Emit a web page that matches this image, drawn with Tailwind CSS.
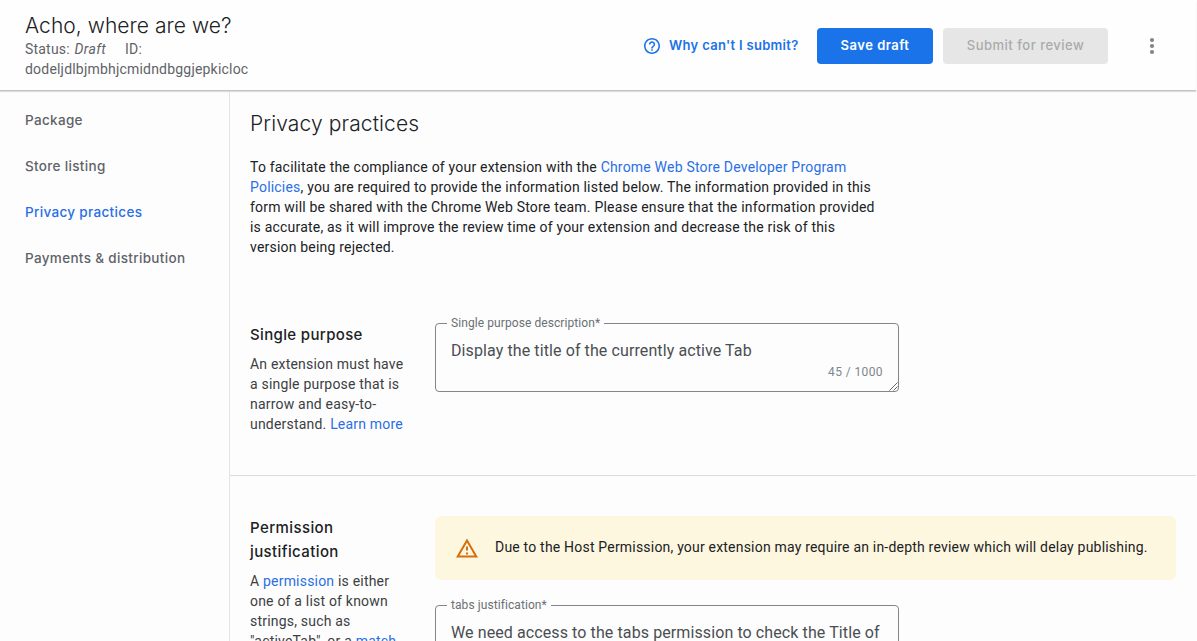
<!DOCTYPE html>
<html lang="en">
<head>
<meta charset="utf-8">
<title>Privacy practices</title>
<script src="https://cdn.jsdelivr.net/npm/@tailwindcss/browser@4"></script>
</head>
<body class="flex h-[641px] w-[1197px] flex-col overflow-hidden bg-[#fdfdfd] pr-px font-['Roboto',sans-serif] text-sm leading-5 text-[#202124]">
<header class="relative z-10 flex h-[90px] shrink-0 items-center bg-[#fefefe] pr-8 pl-[25px] shadow-[0_1px_0_#c2c4c4,0_2px_1px_#dcdedd]">
  <div class="h-[78px] w-[240px] pt-[6px] tracking-[0.2px] text-[#5f6368]">
    <h1 class="h-[27px] font-[Inter] text-[21px] leading-[27px] font-light whitespace-nowrap tracking-[0.05px] text-[#202124]">Acho, where are we?</h1>
    <p>Status: <i class="ml-px tracking-[0.35px]">Draft</i><span class="ml-[19px]">ID:</span></p>
    <p>dodeljdlbjmbhjcmidndbggjepkicloc</p>
  </div>
  <div class="ml-auto flex items-center pt-[2px] font-[Inter] text-[13px] font-semibold">
    <a class="flex items-center gap-[9px] text-[#1a73e8]">
      <svg class="size-4" viewBox="2 2 20 20" fill="currentColor"><path d="M11 18h2v-2h-2v2zm1-16C6.48 2 2 6.48 2 12s4.480 10 10 10 10-4.480 10-10S17.520 2 12 2zm0 18c-4.410 0-8-3.590-8-8s3.590-8 8-8 8 3.590 8 8-3.590 8-8 8zm0-14c-2.210 0-4 1.790-4 4h2c0-1.100.9-2 2-2s2 .9 2 2c0 2-3 1.750-3 5h2c0-2.250 3-2.500 3-5 0-2.210-1.790-4-4-4z"/></svg>
      <span class="w-[130px] pb-[2px] tracking-[0.3px] whitespace-nowrap">Why can't I submit?</span>
    </a>
    <button class="ml-[18px] h-9 w-[116px] rounded bg-[#1a73e8] pb-[2px] tracking-[0.5px] whitespace-nowrap text-white">Save draft</button>
    <button class="ml-[10px] h-9 w-[165px] rounded bg-[#e6e6e6] pb-[2px] font-medium tracking-[0.5px] whitespace-nowrap text-[#a9abac]">Submit for review</button>
    <svg class="ml-8 size-6 text-[#80868b]" viewBox="0 0 24 24" fill="currentColor"><circle cx="12" cy="6" r="2.100"/><circle cx="12" cy="12" r="2.100"/><circle cx="12" cy="18" r="2.100"/></svg>
  </div>
</header>
<div class="flex min-h-0 flex-1">
  <nav class="flex w-[230px] shrink-0 flex-col gap-[26px] border-r border-[#e2e4e7] pt-5 pl-[25px] font-[Inter] text-[13.5px] font-medium tracking-[0.33px] text-[#5f6368]">
    <a>Package</a>
    <a>Store listing</a>
    <a class="text-[#2a6fe6]">Privacy practices</a>
    <a>Payments &amp; distribution</a>
  </nav>
  <main class="min-w-0 flex-1">
    <section class="h-[386px] border-b border-[#dadce0] pt-5 pl-5">
      <h2 class="font-[Inter] text-[21px] leading-7 font-light tracking-[0.12px]">Privacy practices</h2>
      <p class="mt-[19px] w-[640px] tracking-[0.2px]">To facilitate the compliance of your extension with the <a class="text-[#2a6fe6]">Chrome Web Store Developer Program<br>Policies</a>, you are required to provide the information listed below. The information provided in this<br>form will be shared with the Chrome Web Store team. Please ensure that the information provided<br>is accurate, as it will improve the review time of your extension and decrease the risk of this<br>version being rejected.</p>
      <div class="mt-[66px] flex">
        <div class="w-[185px] tracking-[0.2px] text-[#3c4043]">
          <h3 class="mb-[7px] font-[Inter] text-[15px] leading-6 font-medium tracking-[0.35px] text-[#202124]">Single purpose</h3>
          <p class="whitespace-nowrap">An extension must have<br>a single purpose that is<br>narrow and easy-to-<br>understand. <a class="text-[#2a6fe6]">Learn more</a></p>
        </div>
        <div class="relative h-[69px] w-[464px] rounded border border-[#80868b] px-[15px] pt-[15px]">
          <span class="absolute -top-[9px] left-[11px] bg-[#fdfdfd] px-1 text-xs leading-4 tracking-[0.08px] text-[#6b7075]">Single purpose description*</span>
          <p class="text-base leading-6 tracking-[0.1px] text-[#4a4e52]">Display the title of the currently active Tab</p>
          <p class="text-right text-xs leading-[18px] tracking-[0.4px] text-[#80868b]">45 / 1000</p>
          <svg class="absolute right-0 bottom-0 size-[9px]" viewBox="0 0 9 9" fill="none" stroke="#55585c" stroke-width=".9"><path d="M.5 8.500 8.500.5M4.500 8.500 8.500 4.500"/></svg>
        </div>
      </div>
    </section>
    <section class="flex pt-10 pr-5 pl-5">
      <div class="w-[185px] shrink-0 tracking-[0.2px] text-[#3c4043]">
        <h3 class="mb-[7px] font-[Inter] text-[15px] leading-6 font-medium tracking-[0.4px] text-[#202124]">Permission<br>justification</h3>
        <p class="whitespace-nowrap">A <a class="text-[#2a6fe6]">permission</a> is either<br>one of a list of known<br>strings, such as<br>"activeTab", or a <a class="text-[#2a6fe6]">match</a></p>
      </div>
      <div class="flex-1">
        <div class="flex h-16 items-center gap-[17px] rounded-md bg-[#fef7e0] pl-[21px] tracking-[0.2px]">
          <svg class="size-[22px]" viewBox="1 1 22 21" fill="#d56e0c"><path d="M12 5.990 19.530 19H4.470L12 5.990M12 2 1 21h22L12 2zm1 14h-2v2h2v-2zm0-6h-2v4h2v-4z"/></svg>
          <span class="pb-[2px] whitespace-nowrap">Due to the Host Permission, your extension may require an in-depth review which will delay publishing.</span>
        </div>
        <div class="relative mt-[25px] h-[90px] w-[464px] rounded border border-[#80868b] px-[15px] pt-[15px]">
          <span class="absolute -top-[9px] left-[11px] bg-[#fdfdfd] px-1 text-xs leading-4 tracking-[0.08px] text-[#6b7075]">tabs justification*</span>
          <p class="text-base leading-6 tracking-[0.1px] whitespace-nowrap text-[#4a4e52]">We need access to the tabs permission to check the Title of</p>
        </div>
      </div>
    </section>
  </main>
</div>
</body>
</html>
